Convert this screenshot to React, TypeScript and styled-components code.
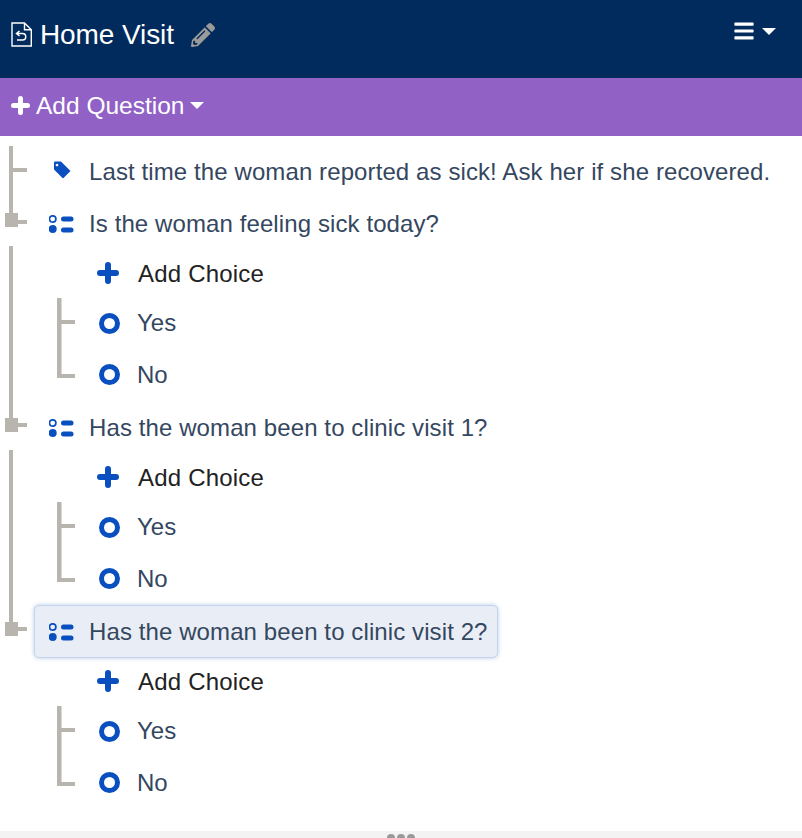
import React from "react";
import styled, { createGlobalStyle } from "styled-components";
import { FaPencilAlt, FaBars } from "react-icons/fa";

const Global = createGlobalStyle`
  html, body { margin: 0; padding: 0; height: 838px; overflow: hidden; background: #fff; }
  body { font-family: "Liberation Sans", Arial, sans-serif; }
`;
const Page = styled.div`
  width: 802px; height: 838px; display: flex; flex-direction: column; overflow: hidden;
`;
const Header = styled.header`
  height: 78px; flex: none; background: #002b5c; color: #fff; display: flex;
  align-items: flex-start; justify-content: space-between; padding: 20px 26px 0 11px; box-sizing: border-box;
`;
const TitleGroup = styled.div`display: flex; align-items: center; height: 28px;`;
const Title = styled.h1`
  margin: 2px 0 0 8px; font-size: 28px; font-weight: 400; line-height: 28px; letter-spacing: -0.1px;
`;
const Pencil = styled(FaPencilAlt)`color: #9a9a9a; font-size: 24px; margin-left: 17px; margin-top: 2px;`;
const Menu = styled.div`display: flex; align-items: center; gap: 7px; height: 22px;`;
const Caret = styled.span<{ $w: number }>`
  width: 0; height: 0; display: inline-block;
  border-left: ${p => p.$w}px solid transparent; border-right: ${p => p.$w}px solid transparent;
  border-top: ${p => p.$w}px solid #fff;
`;
const Toolbar = styled.div`
  height: 58px; flex: none; background: #9161c6; color: #fff; display: flex; align-items: center;
  padding: 0 0 3px 11px; box-sizing: border-box; font-size: 24.5px;
`;
const ToolLabel = styled.span`margin: 0 6px 0 6px;`;
const Tree = styled.main`flex: 1; padding-top: 10px; min-height: 0;`;
const Section = styled.section`display: flex;`;
const Rail = styled.svg`width: 28px; flex: none; overflow: visible; display: block;`;
const Rows = styled.div`flex: 1; min-width: 0; display: flex; flex-direction: column;`;
const Row = styled.div<{ $h: number }>`
  height: ${p => p.$h}px; display: flex; align-items: center; box-sizing: border-box;
`;
const QuestionRow = styled(Row)<{ $active?: boolean }>`
  margin-left: 6px; width: 464px; padding-left: 13px; border-radius: 5px; border: 1px solid transparent;
  white-space: nowrap;
  ${p => p.$active ? `
    background: #e9eef6; border-color: #c5d4ea;
    box-shadow: 0 0 4px rgba(120,160,215,.55);
  ` : ""}
`;
const IconSlot = styled.span`
  width: 27px; flex: none; display: flex; justify-content: center; align-items: center; color: #0a4fc0; margin-right: 14px;
`;
const TagSlot = styled(IconSlot)`margin-top: -3px;`;
const QuestionText = styled.span`font-size: 24px; color: #35475f; letter-spacing: 0.1px; padding-top: 1px;`;
const ChoiceBlock = styled.div`display: flex; margin-left: 29px;`;
const ChoiceRail = styled.svg`width: 20px; flex: none; overflow: visible; display: block;`;
const ChoiceRows = styled.div`display: flex; flex-direction: column; flex: 1;`;
const AddRow = styled(Row)`padding-left: 69px;`;
const AddPlus = styled.span`display: flex; margin-right: 19px; margin-top: -2px;`;
const AddText = styled.span`font-size: 24px; color: #222; letter-spacing: 0.2px;`;
const ChoiceRow = styled(Row)`padding-left: 22px;`;
const Ring = styled.span`
  width: 21px; height: 21px; box-sizing: border-box; border: 5.5px solid #0a4fc0; border-radius: 50%; margin-right: 17px; flex: none;
`;
const ChoiceText = styled.span`font-size: 24px; color: #35475f;`;
const Footer = styled.footer`
  height: 7px; flex: none; background: #f3f3f3; display: flex; justify-content: center; gap: 2px;
  padding: 3px 0 0 0; box-sizing: border-box; overflow: hidden;
`;
const Dot = styled.i`width: 8px; height: 8px; border-radius: 50%; background: #999; flex: none;`;

const G = "#b8b4ae";

const Plus = ({ size, weight, color }: { size: number; weight: number; color: string }) => (
  <svg width={size} height={size} viewBox={`0 0 ${size} ${size}`} stroke={color} strokeWidth={weight} strokeLinecap="round" style={{ flex: "none" }}>
    <path d={`M${size / 2} ${weight / 2}V${size - weight / 2}M${weight / 2} ${size / 2}H${size - weight / 2}`} />
  </svg>
);
const FileIcon = () => (
  <svg width="21" height="25" viewBox="0 0 21 25" fill="none" stroke="#fff" strokeWidth="1.4">
    <path d="M1 1h12.500l6.800 6.800V24H1z" />
    <path d="M13.500 1v6.800h6.800" />
    <path d="M8.500 9 5.500 11.500 8.500 14M5.500 11.500H11.500a3.200 3.200 0 0 1 0 6.500H6" strokeWidth="1.500" />
  </svg>
);
const TagIcon = () => (
  <svg width="18" height="18" viewBox="0 0 18 18">
    <path
      fillRule="evenodd"
      fill="#0a4fc0"
      d="M1 1.500Q1 .5 2 .5H8L17.500 10 10.500 17Q10 17.500 9.500 17L1 8.500ZM4 2.700a1.300 1.300 0 1 0 .01 0Z"
    />
  </svg>
);
const ListIcon = () => (
  <svg width="25" height="18" viewBox="0 0 25 18" fill="#0a4fc0">
    <circle cx="3.700" cy="4" r="3.200" fill="none" stroke="#0a4fc0" strokeWidth="1.700" />
    <circle cx="3.700" cy="14" r="4" />
    <rect x="12" y="1.500" width="12.500" height="5" rx="2.500" />
    <rect x="12" y="12.500" width="12.500" height="5" rx="2.500" />
  </svg>
);
const MainRail = ({ first }: { first?: boolean }) => (
  <Rail height={first ? 104 : 204}>
    <rect x="9" y={first ? 0 : -4} width="4" height={first ? 70 : 172} fill={G} />
    {first && <rect x="13" y="22" width="14" height="4" fill={G} />}
    <rect x="5" y={first ? 67 : 168} width="13" height="14" fill={G} />
    <rect x="18" y={first ? 74 : 173} width="9" height="4" fill={G} />
  </Rail>
);
const Choices = () => (
  <ChoiceBlock>
    <ChoiceRail height={103}>
      <rect x="0" y="0" width="4.500" height="80" fill={G} />
      <rect x="4" y="22" width="14" height="4" fill={G} />
      <rect x="4" y="76" width="14" height="4" fill={G} />
    </ChoiceRail>
    <ChoiceRows>
      <ChoiceRow $h={50}><Ring /><ChoiceText>Yes</ChoiceText></ChoiceRow>
      <ChoiceRow $h={53}><Ring /><ChoiceText>No</ChoiceText></ChoiceRow>
    </ChoiceRows>
  </ChoiceBlock>
);
const Add = () => (
  <AddRow $h={48}>
    <AddPlus><Plus size={22} weight={6} color="#0a4fc0" /></AddPlus>
    <AddText>Add Choice</AddText>
  </AddRow>
);
const Question = ({ text, active }: { text: string; active?: boolean }) => (
  <QuestionRow $h={53} $active={active}>
    <IconSlot><ListIcon /></IconSlot>
    <QuestionText>{text}</QuestionText>
  </QuestionRow>
);

export default function App() {
  return (
    <Page>
      <Global />
      <Header>
        <TitleGroup>
          <FileIcon />
          <Title>Home Visit</Title>
          <Pencil />
        </TitleGroup>
        <Menu>
          <FaBars size={22} />
          <Caret $w={7} />
        </Menu>
      </Header>
      <Toolbar>
        <Plus size={19} weight={5} color="#fff" />
        <ToolLabel>Add Question</ToolLabel>
        <Caret $w={7} />
      </Toolbar>
      <Tree>
        <Section>
          <MainRail first />
          <Rows>
            <QuestionRow $h={51}>
              <TagSlot><TagIcon /></TagSlot>
              <QuestionText>Last time the woman reported as sick! Ask her if she recovered.</QuestionText>
            </QuestionRow>
            <Question text="Is the woman feeling sick today?" />
          </Rows>
        </Section>
        <Section>
          <MainRail />
          <Rows>
            <Add />
            <Choices />
            <Question text="Has the woman been to clinic visit 1?" />
          </Rows>
        </Section>
        <Section>
          <MainRail />
          <Rows>
            <Add />
            <Choices />
            <Question text="Has the woman been to clinic visit 2?" active />
          </Rows>
        </Section>
        <Section>
          <Rail height={1} />
          <Rows>
            <Add />
            <Choices />
          </Rows>
        </Section>
      </Tree>
      <Footer><Dot /><Dot /><Dot /></Footer>
    </Page>
  );
}
